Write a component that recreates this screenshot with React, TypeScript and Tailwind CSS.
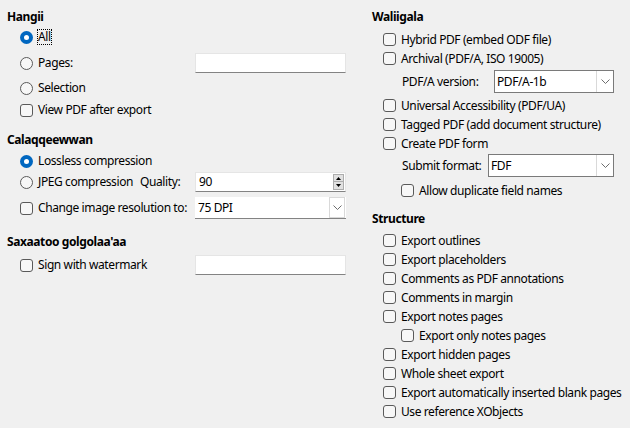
import type { ReactNode } from 'react';

// Small helpers for the dialog controls
const Radio = ({ checked = false, label, focus = false }: { checked?: boolean; label: string; focus?: boolean }) => (
  <div className="flex items-center whitespace-nowrap">
    {checked ? (
      <span className="w-[13px] h-[13px] rounded-full bg-[#0067c0] flex items-center justify-center">
        <span className="w-[5px] h-[5px] rounded-full bg-white" />
      </span>
    ) : (
      <span className="w-[13px] h-[13px] rounded-full border border-[#5a5a5a] bg-[#f7f7f7]" />
    )}
    <span className={focus ? 'ml-[5px] outline-1 outline-dotted outline-black leading-[14px]' : 'ml-[5px]'}>{label}</span>
  </div>
);

const Check = ({ label }: { label: string }) => (
  <div className="flex items-center whitespace-nowrap">
    <span className="w-[13px] h-[13px] rounded-[3px] border border-[#5a5a5a] bg-[#f7f7f7]" />
    <span className="ml-[5px]">{label}</span>
  </div>
);

const TextInput = ({ value = '', className = '' }: { value?: string; className?: string }) => (
  <div className={`h-[20px] bg-white border border-[#e5e5e5] border-b-[#838383] flex items-center pl-[3px] ${className}`}>
    {value}
  </div>
);

const Chevron = () => (
  <svg width="9" height="6" viewBox="0 0 9 6">
    <path d="M0.5 0.5 L4.5 4.5 L8.5 0.5" fill="none" stroke="#6d6d6d" strokeWidth="1" />
  </svg>
);

const SpinInput = ({ value }: { value: string }) => (
  <div className="w-[151px] h-[20px] bg-white border border-[#e5e5e5] border-b-[#838383] flex items-center pl-[3px]">
    <span className="flex-1">{value}</span>
    <div className="flex flex-col mr-[1px]">
      <span className="w-[11px] h-[8px] bg-[#e1e1e1] border border-[#adadad] flex items-center justify-center">
        <svg width="5" height="3" viewBox="0 0 5 3"><path d="M2.5 0 L5 3 L0 3 Z" fill="#000" /></svg>
      </span>
      <span className="w-[11px] h-[8px] bg-[#e1e1e1] border border-[#adadad] border-t-0 flex items-center justify-center">
        <svg width="5" height="3" viewBox="0 0 5 3"><path d="M0 0 L5 0 L2.5 3 Z" fill="#000" /></svg>
      </span>
    </div>
  </div>
);

const FlatSelect = ({ value }: { value: string }) => (
  <div className="w-[151px] h-[22px] bg-white border-b border-[#838383] flex items-center pl-[3px]">
    <span className="flex-1">{value}</span>
    <span className="w-[16px] h-[21px] border border-[#d9d9d9] bg-white flex items-center justify-center mr-[1px]">
      <Chevron />
    </span>
  </div>
);

const BoxSelect = ({ value, className = '' }: { value: string; className?: string }) => (
  <div className={`h-[23px] bg-white border border-[#7a7a7a] flex items-center pl-[2px] ${className}`}>
    <span className="flex-1">{value}</span>
    <span className="w-[17px] h-[21px] border-l border-[#d9d9d9] flex items-center justify-center">
      <Chevron />
    </span>
  </div>
);

const Heading = ({ children, className = '' }: { children: ReactNode; className?: string }) => (
  <div className={`h-[16px] flex items-center font-bold whitespace-nowrap ${className}`}>{children}</div>
);

export default function App() {
  return (
    <div
      className="w-[630px] h-[428px] bg-[#f0f0f0] text-black text-[12px] tracking-[-0.4px] flex overflow-hidden"
      style={{ fontFamily: '"Noto Sans", "Open Sans", sans-serif' }}
    >
      {/* Left column */}
      <div className="w-[365px] pl-[7px] pt-[9px] flex flex-col">
        <Heading>Hangii</Heading>
        <div className="pl-[13px] pr-[19px] flex flex-col">
          <div className="h-[20px] mt-[2px] flex items-center">
            <Radio checked label="All" focus />
          </div>
          <div className="h-[20px] mt-[6px] flex items-center justify-between">
            <Radio label="Pages:" />
            <TextInput className="w-[151px]" />
          </div>
          <div className="h-[20px] mt-[5px] flex items-center">
            <Radio label="Selection" />
          </div>
          <div className="h-[20px] mt-[2px] flex items-center">
            <Check label="View PDF after export" />
          </div>
        </div>

        <Heading className="mt-[12px]">Calaqqeewwan</Heading>
        <div className="pl-[13px] pr-[19px] flex flex-col">
          <div className="h-[20px] mt-[3px] flex items-center">
            <Radio checked label="Lossless compression" />
          </div>
          <div className="h-[20px] mt-[1px] flex items-center justify-between">
            <div className="flex items-center whitespace-nowrap">
              <Radio label="JPEG compression" />
              <span className="ml-[7px]">Quality:</span>
            </div>
            <SpinInput value="90" />
          </div>
          <div className="h-[22px] mt-[5px] flex items-center justify-between">
            <Check label="Change image resolution to:" />
            <FlatSelect value="75 DPI" />
          </div>
        </div>

        <Heading className="mt-[15px]">Saxaatoo golgolaa'aa</Heading>
        <div className="pl-[13px] pr-[19px] flex flex-col">
          <div className="h-[20px] mt-[5px] flex items-center justify-between">
            <Check label="Sign with watermark" />
            <TextInput className="w-[151px]" />
          </div>
        </div>
      </div>

      {/* Right column */}
      <div className="flex-1 pl-[7px] pt-[9px] flex flex-col">
        <Heading>Waliigala</Heading>
        <div className="pl-[11px] pr-[16px] flex flex-col">
          <div className="h-[19px] mt-[5px] flex items-center">
            <Check label="Hybrid PDF (embed ODF file)" />
          </div>
          <div className="h-[19px] flex items-center">
            <Check label="Archival (PDF/A, ISO 19005)" />
          </div>
          <div className="h-[23px] mt-[2px] flex items-center pl-[19px] whitespace-nowrap">
            <span className="w-[92px]">PDF/A version:</span>
            <BoxSelect value="PDF/A-1b" className="flex-1" />
          </div>
          <div className="h-[19px] mt-[3px] flex items-center">
            <Check label="Universal Accessibility (PDF/UA)" />
          </div>
          <div className="h-[19px] flex items-center">
            <Check label="Tagged PDF (add document structure)" />
          </div>
          <div className="h-[19px] flex items-center">
            <Check label="Create PDF form" />
          </div>
          <div className="h-[23px] mt-[1px] flex items-center pl-[19px] whitespace-nowrap">
            <span className="w-[86px]">Submit format:</span>
            <BoxSelect value="FDF" className="flex-1" />
          </div>
          <div className="h-[19px] mt-[4px] flex items-center pl-[18px]">
            <Check label="Allow duplicate field names" />
          </div>
        </div>

        <Heading className="mt-[11px]">Structure</Heading>
        <div className="pl-[11px] flex flex-col mt-[4px]">
          {[
            'Export outlines',
            'Export placeholders',
            'Comments as PDF annotations',
            'Comments in margin',
            'Export notes pages',
          ].map((t) => (
            <div key={t} className="h-[19px] flex items-center">
              <Check label={t} />
            </div>
          ))}
          <div className="h-[19px] flex items-center pl-[18px]">
            <Check label="Export only notes pages" />
          </div>
          {[
            'Export hidden pages',
            'Whole sheet export',
            'Export automatically inserted blank pages',
            'Use reference XObjects',
          ].map((t) => (
            <div key={t} className="h-[19px] flex items-center">
              <Check label={t} />
            </div>
          ))}
        </div>
      </div>
    </div>
  );
}
